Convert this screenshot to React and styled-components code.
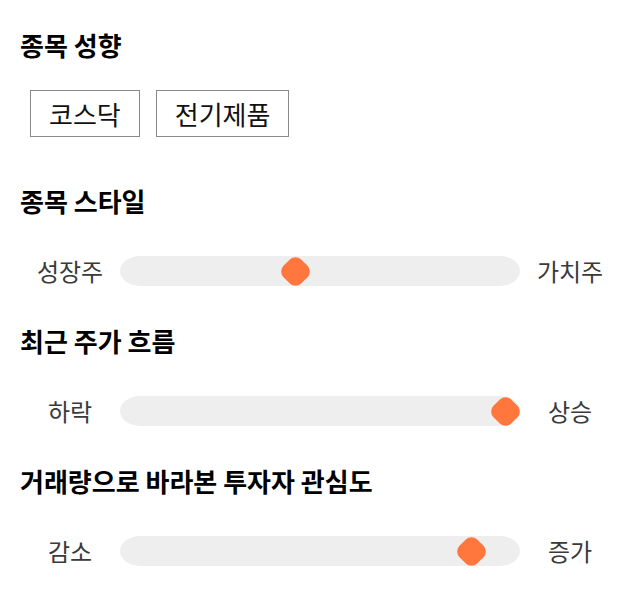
import * as React from "react";
import styled, { createGlobalStyle } from "styled-components";

const GlobalStyle = createGlobalStyle`
  body {
    margin: 0;
    background: #fff;
    font-family: "Noto Sans CJK KR", "Noto Sans", sans-serif;
  }
`;

const sliders = [
  { title: "종목 스타일", left: "성장주", right: "가치주", value: 0.434 },
  { title: "최근 주가 흐름", left: "하락", right: "상승", value: 1 },
  { title: "거래량으로 바라본 투자자 관심도", left: "감소", right: "증가", value: 0.91 },
];

function Slider({ left, right, value }) {
  return (
    <SliderRow>
      <SideLabel>{left}</SideLabel>
      <Track>
        <Thumb style={{ left: `${value * 370}px` }} />
      </Track>
      <SideLabel>{right}</SideLabel>
    </SliderRow>
  );
}

export default function App() {
  return (
    <Page>
      <GlobalStyle />
      <Heading>종목 성향</Heading>
      <TagList>
        <Tag>코스닥</Tag>
        <Tag>전기제품</Tag>
      </TagList>
      {sliders.map((s) => (
        <Section key={s.title}>
          <Heading>{s.title}</Heading>
          <Slider left={s.left} right={s.right} value={s.value} />
        </Section>
      ))}
    </Page>
  );
}

const Page = styled.div`
  width: 640px;
  padding-top: 28px;
  color: #111;
`;

const Heading = styled.div`
  padding-left: 20px;
  font: 700 26px/34px "Noto Sans CJK KR", sans-serif;
  color: #000;
`;

const TagList = styled.div`
  display: flex;
  gap: 16px;
  margin: 28px 0 47px 30px;
`;

const Tag = styled.div`
  display: flex;
  align-items: center;
  justify-content: center;
  height: 47px;
  box-sizing: border-box;
  padding: 0 18px;
  border: 1px solid #8a8a8a;
  font: 400 26px/34px "Noto Sans CJK KR", sans-serif;
  color: #111;
`;

const Section = styled.div`
  padding-bottom: 38px;
`;

const SliderRow = styled.div`
  display: flex;
  align-items: center;
  margin-top: 38px;
  padding: 0 20px;
  height: 30px;
`;

const SideLabel = styled.div`
  width: 100px;
  text-align: center;
  font: 400 24px/30px "Noto Sans CJK KR", sans-serif;
  color: #3a3a3a;
`;

const Track = styled.div`
  position: relative;
  flex: 1;
  height: 30px;
  background: #eeeeee;
  border-radius: 20px / 15px;
`;

const Thumb = styled.div`
  position: absolute;
  top: 2.5px;
  width: 25px;
  height: 25px;
  margin-left: 2.5px;
  background: #ff773d;
  border-radius: 8px;
  transform: rotate(45deg);
`;
